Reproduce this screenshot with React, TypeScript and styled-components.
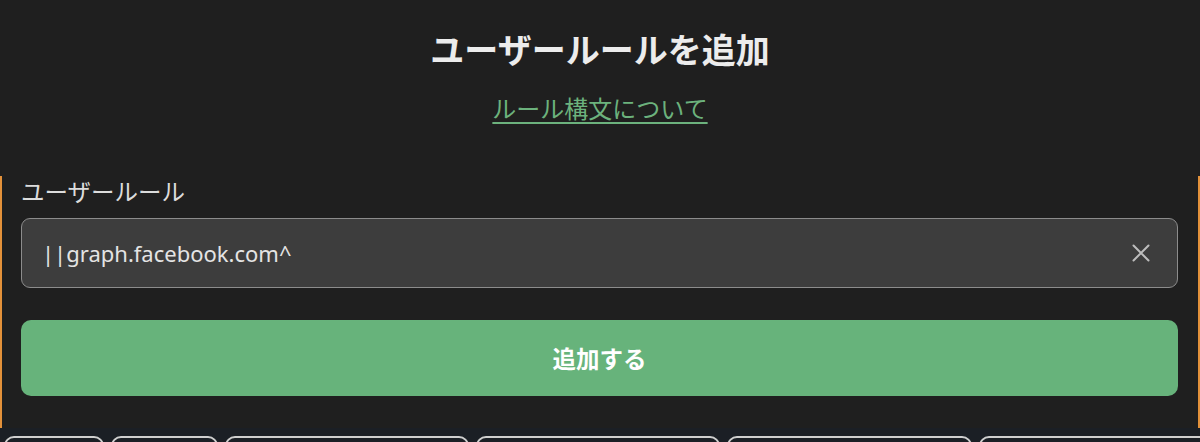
import { FC } from 'react'
import styled, { createGlobalStyle } from 'styled-components'

const GlobalStyle = createGlobalStyle`
  html, body {
    margin: 0;
    padding: 0;
    background: #1f1f1f;
    font-family: "Noto Sans CJK JP", "Noto Sans", sans-serif;
    -webkit-font-smoothing: antialiased;
  }
`

const Page = styled.div`
  display: flex;
  flex-direction: column;
  height: 442px;
  overflow: hidden;
  background: #1f1f1f;
`

const Header = styled.header`
  flex: 0 0 148px;
  display: flex;
  flex-direction: column;
  align-items: center;
  padding-top: 27px;
  box-sizing: border-box;
`

const Title = styled.h1`
  margin: 0;
  font-size: 34px;
  line-height: 44px;
  font-weight: 700;
  color: #ececec;
`

const SyntaxLink = styled.a`
  margin-top: 21px;
  font-size: 24px;
  line-height: 32px;
  color: #6cb27d;
  text-decoration: underline;
  text-underline-offset: 4px;
  text-decoration-thickness: 1.5px;
  cursor: pointer;
`

const Sheet = styled.section`
  flex: 0 0 252px;
  display: flex;
  flex-direction: column;
  margin-top: 28px;
  box-sizing: border-box;
  padding: 0 20px 0 19px;
  border-left: 2px solid #e3913a;
  border-right: 2px solid #e3913a;
`

const Label = styled.label`
  font-size: 23.5px;
  line-height: 30px;
  color: #dcdcdc;
`

const InputBox = styled.div`
  flex: 0 0 70px;
  display: flex;
  align-items: center;
  margin-top: 12px;
  box-sizing: border-box;
  padding: 0 16px 0 20px;
  background: #3d3d3d;
  border: 1px solid #8c8c8c;
  border-radius: 9px;
`

const RuleInput = styled.input`
  flex: 1;
  min-width: 0;
  border: none;
  outline: none;
  background: transparent;
  font-family: "Noto Sans", "Noto Sans CJK JP", sans-serif;
  font-size: 22px;
  color: #e4e4e4;
  padding: 0;
`

const ClearButton = styled.button`
  display: flex;
  align-items: center;
  justify-content: center;
  width: 40px;
  height: 40px;
  padding: 0;
  border: none;
  background: transparent;
  color: #bdbdbd;
  cursor: pointer;
`

const SubmitButton = styled.button`
  flex: 0 0 76px;
  margin-top: 32px;
  border: none;
  border-radius: 10px;
  background: #67b37b;
  color: #ffffff;
  font-family: "Noto Sans CJK JP", sans-serif;
  font-size: 23.5px;
  font-weight: 700;
  cursor: pointer;
`

const ChipStrip = styled.div`
  flex: 1 0 auto;
  display: flex;
  gap: 7px;
  padding: 8px 0 0 4px;
  background: #1b1f25;
`

const Chip = styled.div<{ w: number }>`
  flex: 0 0 ${({ w }) => w}px;
  height: 40px;
  box-sizing: border-box;
  border: 2px solid #cfcfcf;
  border-radius: 10px;
`

const chipWidths = [100, 107, 244, 244, 245, 245]

const App: FC = () => {
  return (
    <>
      <GlobalStyle />
      <Page>
        <Header>
          <Title>ユーザールールを追加</Title>
          <SyntaxLink>ルール構文について</SyntaxLink>
        </Header>
        <Sheet>
          <Label htmlFor='user-rule'>ユーザールール</Label>
          <InputBox>
            <RuleInput id='user-rule' defaultValue='||graph.facebook.com^' />
            <ClearButton aria-label='clear'>
              <svg width='20' height='20' viewBox='0 0 20 20' fill='none'>
                <path
                  d='M2.5 2.5L17.5 17.5M17.5 2.5L2.5 17.5'
                  stroke='currentColor'
                  strokeWidth='2'
                  strokeLinecap='round'
                />
              </svg>
            </ClearButton>
          </InputBox>
          <SubmitButton>追加する</SubmitButton>
        </Sheet>
        <ChipStrip>
          {chipWidths.map((w, i) => (
            <Chip key={i} w={w} />
          ))}
        </ChipStrip>
      </Page>
    </>
  )
}

export default App
